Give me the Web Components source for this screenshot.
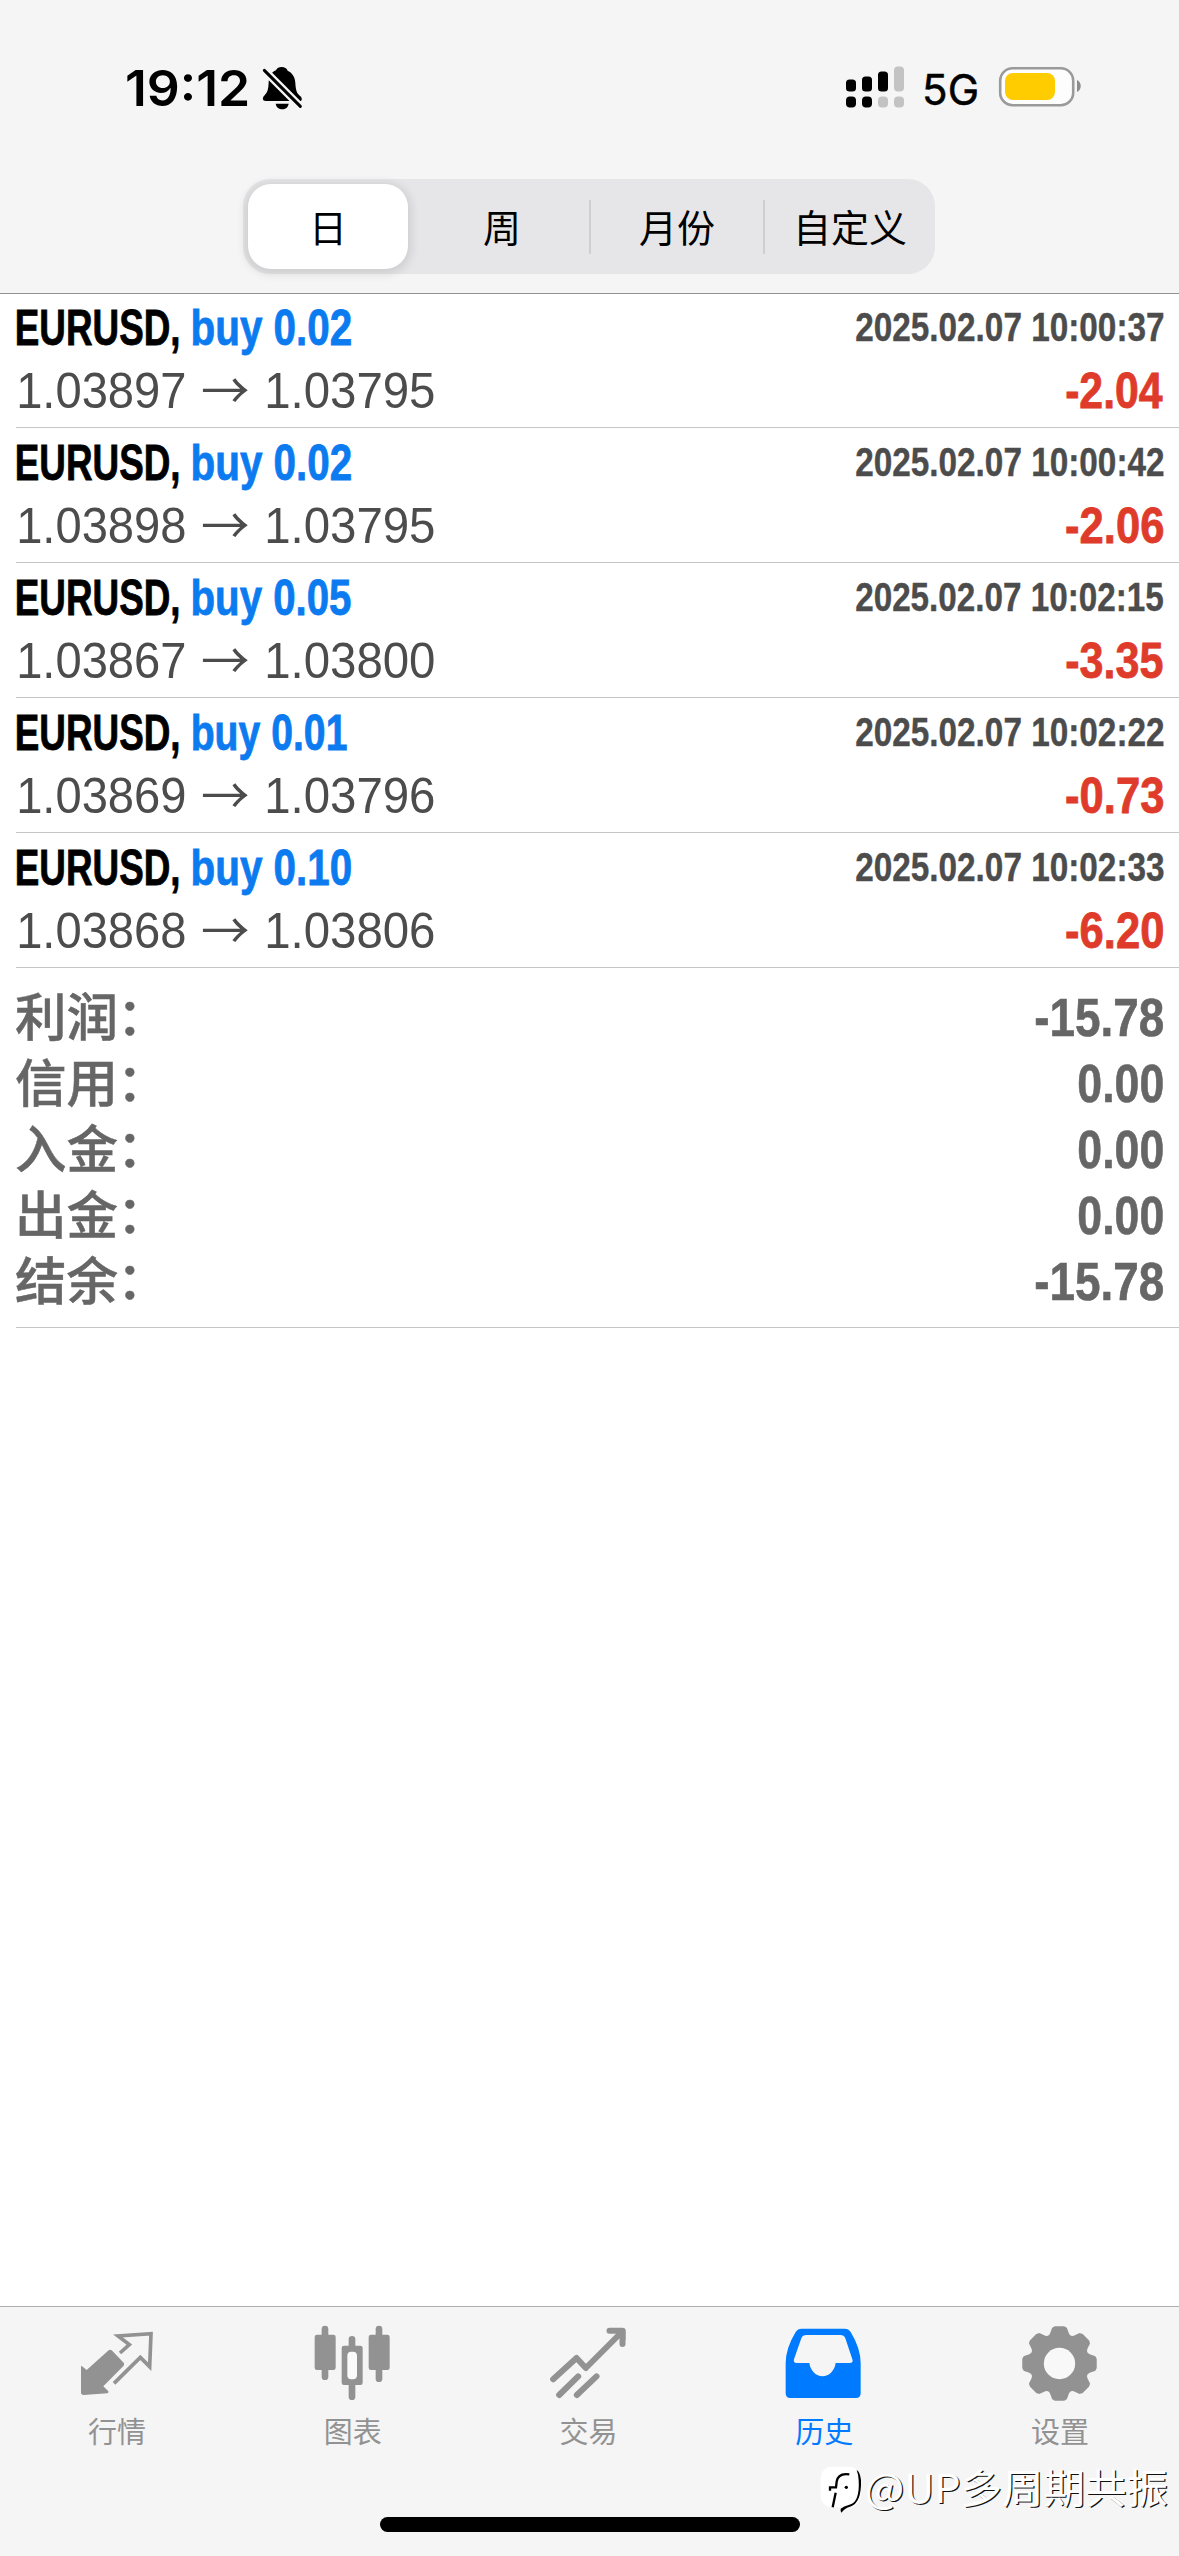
<!DOCTYPE html>
<html lang="zh-CN">
<head>
<meta charset="utf-8">
<title>历史</title>
<style>
html,body{margin:0;padding:0}
body{width:1179px;height:2556px;overflow:hidden;background:#fff;font-family:"Liberation Sans","Noto Sans CJK SC",sans-serif}
</style>
</head>
<body>
<history-app></history-app>
<script>
const define = (name, html, ready) => customElements.define(name, class extends HTMLElement {
  connectedCallback() {
    if (this.shadowRoot) return;
    const root = this.attachShadow({mode: 'open'});
    root.innerHTML = typeof html === 'function' ? html(this) : html;
    if (ready) ready(this, root);
  }
});

// Text condensed or stretched so that its ink fills exactly `w` pixels.
const pen = document.createElement('canvas').getContext('2d');
define('fit-text', el => `<style>
:host{display:block;flex:none;white-space:pre;width:${el.getAttribute('w')}px}
span{display:inline-block;transform-origin:0 50%;white-space:pre}
</style><span>${el.getAttribute('text')}</span>`, (el, root) => {
  const s = root.querySelector('span'), c = getComputedStyle(s);
  pen.font = `${c.fontWeight} ${c.fontSize} ${c.fontFamily}`;
  const m = pen.measureText(el.getAttribute('text'));
  const k = el.getAttribute('w') / (m.actualBoundingBoxLeft + m.actualBoundingBoxRight);
  s.style.transform = `translateX(${m.actualBoundingBoxLeft * k}px) scaleX(${k})`;
});

define('status-bar', `<style>
:host{display:flex;height:179px;box-sizing:border-box;padding:58px 98px 0 127px;align-items:flex-start;font-family:Inter,sans-serif;color:#000}
.time{font-size:50px;font-weight:600;line-height:60px}
.net{font-size:43px;font-weight:400;line-height:63px;margin-right:22px;-webkit-text-stroke:.5px #000}
.bell{margin:8px auto 0 14px}.sig{margin:8px 21px 0 0}.bat{margin-top:9px}
svg{display:block;flex:none;overflow:visible}
</style>
<fit-text class="time" w="121" text="19:12"></fit-text>
<svg class="bell" width="40" height="44" viewBox="486 78 120 132"><path d="M545 81c9 0 15 4 18 11 15 7 22 20 23 36 1 22 4 33 17 42 4 6 3 13-3 13H497c-9 0-11-9-5-15 11-11 13-19 14-41 1-20 8-30 22-36 3-7 9-10 17-10z"/><path d="M527 191h39c-2 11-10 17-19 17-10 0-18-6-20-17z"/><path d="M492 90L602 200" stroke="#f5f5f5" stroke-width="23"/><path d="M493 91L601 199" stroke="#000" stroke-width="9" stroke-linecap="round"/></svg>
<svg class="sig" width="58" height="42" viewBox="846 66.500 58 42"><g><rect x="846" y="80" width="10" height="12" rx="3.500"/><rect x="862" y="77" width="10" height="15" rx="3.500"/><rect x="878" y="72" width="10" height="20" rx="3.500"/><rect x="846" y="97" width="10" height="11" rx="4"/><rect x="862" y="97" width="10" height="11" rx="4"/></g><g fill="#c3c3c3"><rect x="894" y="67" width="10" height="25" rx="4"/><rect x="878" y="97" width="10" height="11" rx="4"/><rect x="894" y="97" width="10" height="11" rx="4"/></g></svg>
<fit-text class="net" w="52" text="5G"></fit-text>
<svg class="bat" width="82" height="40" viewBox="999 68 82 40"><rect x="1000.200" y="69.200" width="73" height="37" rx="12.500" fill="#fdfdfd" stroke="#9a9a9a" stroke-width="2.600"/><rect x="1005" y="74" width="50" height="27" rx="8" fill="#fc0"/><path d="M1077 81c5 2 5 10 0 12z" fill="#8c8c8c"/></svg>`);

define('segmented-control', `<style>
:host{display:flex;box-sizing:border-box;width:692px;height:95px;margin:0 0 19px 243px;padding:5px 0 5px 5px;border-radius:27px;background:#e6e6e8;font:400 38px/83px "Noto Sans CJK SC",sans-serif;color:#000;align-items:center}
div{width:174px;height:85px;display:flex;justify-content:center;flex:none}
.m{width:172px}.z{width:170px}
.on{width:160px;border-radius:23px;background:#fff;box-shadow:0 2px 10px 3px rgba(0,0,0,.11);margin-right:7px}
i{width:2px;height:54px;background:#cfcfd1;flex:none}
span{display:block}
</style>
<div class="on"><span>日</span></div><div><span>周</span></div><i></i><div class="m"><span>月份</span></div><i></i><div class="z"><span>自定义</span></div>`);

define('deal-row', el => {
  const a = n => el.getAttribute(n);
  return `<style>
:host{display:flex;flex-direction:column;box-sizing:border-box;height:135px;margin-left:16px;padding:3px 16px 0 1px;border-bottom:1px solid #c6c6c8}
.l{display:flex;height:63px;line-height:63px;align-items:flex-start;font-size:49.500px;color:#4c4c4c}
.sym{color:#000;margin-right:14px;font-weight:700;-webkit-text-stroke:.8px #000}
.buy{color:#0c7bf0;margin-right:auto;font-weight:700;-webkit-text-stroke:.8px #0c7bf0}
.date{font-size:40px;font-weight:700;-webkit-text-stroke:.4px #4c4c4c}
.p1{margin:0 17px 0 2px}.p2{margin:0 auto 0 19px}.arr{font-family:"Noto Sans CJK SC",sans-serif;font-weight:400;line-height:57px}
.val{color:#df3b2b;font-weight:700;-webkit-text-stroke:.8px #df3b2b}
</style>
<div class="l"><fit-text class="sym" w="161.500" text="EURUSD,"></fit-text><fit-text class="buy" w="${a('bw') || 158}" text="buy ${a('lot')}"></fit-text><fit-text class="date" w="307.500" text="${a('date')}"></fit-text></div>
<div class="l"><fit-text class="p1" w="166" text="${a('from')}"></fit-text><fit-text class="arr" w="46" text="→"></fit-text><fit-text class="p2" w="167" text="${a('to')}"></fit-text><fit-text class="val" w="97" text="${a('val')}"></fit-text></div>`;
});

define('sum-row', el => `<style>
:host{display:flex;justify-content:space-between;height:66px;line-height:66px;color:#666;font-size:53px;font-weight:700}
.k{font:500 51.500px/66px "Liberation Sans","Noto Sans CJK SC",sans-serif;display:flex;padding-top:1px;-webkit-text-stroke:.5px #666;margin-left:-1px}
.c{margin-left:-1px;transform:translateY(-1px)}
.v{-webkit-text-stroke:.6px #666;padding-top:1px}
</style><span class="k">${el.getAttribute('label')}<span class="c">：</span></span><fit-text class="v" w="${el.getAttribute('w')}" text="${el.getAttribute('val')}"></fit-text>`);

const gear = () => {
  const p = [], P = (r, d) => { const t = d * Math.PI / 180; p.push((298.5 + r * Math.sin(t)).toFixed(1) + ' ' + (205.5 - r * Math.cos(t)).toFixed(1)); };
  for (let i = 0; i < 8; i++) { const d = i * 45; P(86, d - 19.5); P(92, d - 15); P(106, d - 10); P(108, d - 7); P(108, d + 7); P(106, d + 10); P(92, d + 15); P(86, d + 19.5); }
  return `<path stroke="#929292" stroke-width="9" stroke-linejoin="round" d="M${p.join('L')}Z"/><circle cx="298.500" cy="205.500" r="47" fill="#f8f8f8"/>`;
};
const icons = {
  quotes: ['87 87', '<path d="M95 213l15 12 66-59q5-3 9 0l36 37q3 5 0 9l-61 62 15 15q2 5-3 6l-71 5q-8 0-8-8V214z"/><path d="M210 174l28-25-34-26 99-7-4 99-28-28-79 78" fill="none" stroke="#929292" stroke-width="11"/>'],
  charts: ['796 87', '<rect x="795" y="119" width="63" height="106" rx="7"/><rect x="816" y="92" width="20" height="163" rx="10"/><rect x="957" y="119" width="63" height="106" rx="7"/><rect x="978" y="92" width="20" height="169" rx="10"/><rect x="876" y="152" width="63" height="118" rx="7"/><rect x="897" y="123" width="20" height="192" rx="10"/><rect x="893" y="170" width="29" height="83" rx="12" fill="#fafafa"/>'],
  trade: ['91.500 87', '<g fill="none" stroke="#929292" stroke-width="18" stroke-linecap="round" stroke-linejoin="round"><path d="M101 253l70-64 28 30L304 114"/><path d="M270 107H309V147"/><path d="M119 300l57-56M172 300l59-56"/></g><path d="M286 100h24q8 0 8 8v28z"/>'],
  history: ['799 87', '<path fill-rule="evenodd" d="M846 101H975q12 0 18 10 30 49 30 94v90q0 14-14 14H812q-14 0-14-14V205q0-45 30-94 6-10 18-10zM860 120q-11 0-15 10L823 193q-3 11 8 11h38a40 47 0 0 0 79 0h42q12 0 8-11L977 130q-4-10-15-10z"/>'],
  settings: ['186 87', gear()]
};
define('tab-item', el => {
  const [o, body] = icons[el.getAttribute('icon')];
  const c = el.hasAttribute('active') ? '#007aff' : '#929292';
  return `<style>
:host{display:flex;flex:1;flex-direction:column;align-items:center;color:${c};font:400 29px/40px "Noto Sans CJK SC",sans-serif;padding-top:17px}
svg{display:block;overflow:visible;fill:${c};margin-bottom:8px}
span{margin-right:2px}
</style><svg width="78" height="78" viewBox="${o} 234 234">${body}</svg><span>${el.getAttribute('label')}</span>`;
});

define('watermark-tag', `<style>
:host{position:absolute;left:820px;top:2462px;display:flex;align-items:center;height:48px;font:400 40px/48px "Noto Sans CJK SC",sans-serif;color:#fff;text-shadow:1.200px 1.200px 0 #111}
svg{display:block;margin-right:5px;overflow:visible}
</style>
<svg width="42" height="48" viewBox="60 76 126 144"><rect x="62" y="90" width="120" height="122" rx="34" fill="#fff"/><path d="M148 113q-34-5-38 22l-2 17H90v10M107 168l-9 44" fill="none" stroke="#000" stroke-width="7"/><path d="M170 100q10 5 13 30 2 70-33 80-14 3-26 18-3-5-2-12 10-8 24-11 34-6 30-74-1-18-6-31z"/><circle cx="139" cy="152" r="5"/></svg>
<fit-text w="300" text="@UP多周期共振"></fit-text>`);

define('tab-bar', `<style>
:host{display:flex;flex-direction:column;height:250px;box-sizing:border-box;background:#f5f5f5;border-top:1px solid #adadad}
nav{display:flex;height:210px}
.home{width:420px;height:15px;border-radius:8px;background:#000;margin-left:380px}
</style><nav>
<tab-item icon="quotes" label="行情"></tab-item><tab-item icon="charts" label="图表"></tab-item><tab-item icon="trade" label="交易"></tab-item><tab-item icon="history" label="历史" active></tab-item><tab-item icon="settings" label="设置"></tab-item>
</nav><div class="home"></div><watermark-tag></watermark-tag>`);

define('history-app', `<style>
:host{display:flex;flex-direction:column;width:1179px;height:2556px;background:#fff;position:relative}
header{height:293px;background:#f5f5f5;box-shadow:0 1px 0 #929292;flex:none}
main{flex:1}
section{margin-left:16px;padding:16px 16px 0 0;height:343px;border-bottom:1px solid #c6c6c8}
</style>
<header><status-bar></status-bar><segmented-control></segmented-control></header>
<main>
<deal-row lot="0.02" date="2025.02.07 10:00:37" from="1.03897" to="1.03795" val="-2.04"></deal-row>
<deal-row lot="0.02" date="2025.02.07 10:00:42" from="1.03898" to="1.03795" val="-2.06"></deal-row>
<deal-row lot="0.05" date="2025.02.07 10:02:15" from="1.03867" to="1.03800" val="-3.35"></deal-row>
<deal-row lot="0.01" bw="154" date="2025.02.07 10:02:22" from="1.03869" to="1.03796" val="-0.73"></deal-row>
<deal-row lot="0.10" date="2025.02.07 10:02:33" from="1.03868" to="1.03806" val="-6.20"></deal-row>
<section>
<sum-row label="利润" val="-15.78" w="127"></sum-row>
<sum-row label="信用" val="0.00" w="84"></sum-row>
<sum-row label="入金" val="0.00" w="84"></sum-row>
<sum-row label="出金" val="0.00" w="84"></sum-row>
<sum-row label="结余" val="-15.78" w="127"></sum-row>
</section>
</main>
<tab-bar></tab-bar>`);
</script>
</body>
</html>
